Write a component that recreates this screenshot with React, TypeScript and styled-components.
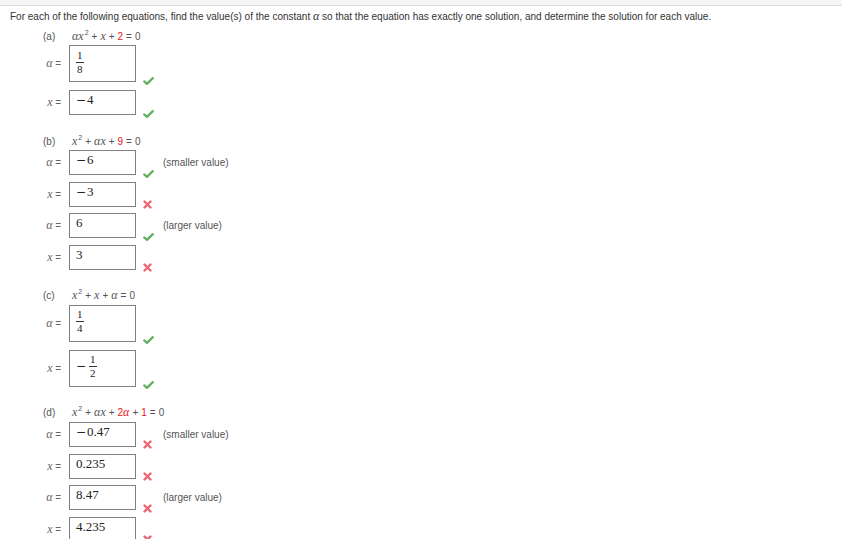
import React from 'react'
import styled, { createGlobalStyle } from 'styled-components'

const GlobalStyle = createGlobalStyle`
  body {
    margin: 0;
    background: #fff;
    font-family: "Liberation Sans", Arial, sans-serif;
    color: #333;
  }
`

const TopBar = styled.div`
  height: 5px;
  background: #f5f5f5;
  border-bottom: 1px solid #dcdcdc;
`

const Content = styled.main`
  display: flex;
  flex-direction: column;
  gap: 19px;
  padding: 3px 0 0 10px;
`

const Intro = styled.p`
  margin: 0 0 -14px;
  font-size: 10px;
  line-height: 14px;
  color: #333;
`

const Part = styled.section`
  display: flex;
  flex-direction: column;
  padding-left: 33px;
`

const Heading = styled.div`
  display: flex;
  align-items: center;
  height: 14px;
  margin-bottom: 2px;
  font-size: 10px;
  color: #555;
  white-space: nowrap;
`

const PartLabel = styled.span`
  width: 29px;
`

const Equation = styled.span`
  line-height: 14px;
`

const Op = styled.span`
  margin: 0 3px;
`

const Red = styled.span`
  color: #e8101a;
`

const Var = styled.i`
  font-family: "Liberation Serif", "Times New Roman", serif;
  font-style: italic;
  font-size: 12px;
`

const Sup = styled.sup`
  font-size: 7px;
  vertical-align: 5px;
  line-height: 0;
  margin-left: 1px;
`

const Rows = styled.div<{ $gap: number }>`
  display: flex;
  flex-direction: column;
  gap: ${p => p.$gap}px;
`

const Row = styled.div`
  display: flex;
  align-items: center;
`

const Label = styled.span`
  width: 21px;
  margin-right: 5px;
  text-align: right;
  font-size: 10px;
  color: #666;
  white-space: pre;
`

const Box = styled.div<{ $tall?: boolean }>`
  box-sizing: border-box;
  width: 67px;
  height: ${p => (p.$tall ? 37 : 25)}px;
  border: 1px solid #808080;
  padding: ${p => (p.$tall ? '0 0 3px 6px' : '1px 0 0 6px')};
  display: flex;
  align-items: ${p => (p.$tall ? 'center' : 'flex-start')};
  font-family: "Liberation Serif", "Times New Roman", serif;
  font-size: 13px;
  line-height: 15px;
  color: #222;
`

const Minus = styled.span<{ $gap?: number }>`
  font-family: "DejaVu Sans", sans-serif;
  font-size: 12px;
  margin-right: ${p => p.$gap ?? 1}px;
`

const Frac = styled.span`
  display: inline-flex;
  flex-direction: column;
  align-items: center;
  font-size: 11px;
  line-height: 11px;
`

const Num = styled.span`
  padding: 0 1px 1px;
`

const Bar = styled.span`
  align-self: stretch;
  height: 1px;
  background: #333;
`

const Den = styled.span`
  padding-top: 1px;
`

const MarkSlot = styled.span`
  align-self: flex-end;
  display: flex;
  width: 20px;
  margin: 0 0 -2.5px 7px;
`

const Note = styled.span`
  font-size: 10px;
  color: #555;
  white-space: nowrap;
`

function Check() {
  return (
    <svg width="11" height="8" viewBox="0 0 11 8">
      <path d="M1.2 4.4 L4 6.8 L9.8 1.2" fill="none" stroke="#62b062" strokeWidth="2.3" strokeLinecap="round" strokeLinejoin="round" />
    </svg>
  )
}

function Cross() {
  return (
    <svg width="9" height="9" viewBox="0 0 9 9">
      <path d="M1.5 1.5 L7.5 7.5 M7.5 1.5 L1.5 7.5" fill="none" stroke="#ef6470" strokeWidth="2.4" strokeLinecap="round" />
    </svg>
  )
}

function Fraction({ n, d }: { n: string; d: string }) {
  return (
    <Frac>
      <Num>{n}</Num>
      <Bar />
      <Den>{d}</Den>
    </Frac>
  )
}

type Answer = {
  v: 'a' | 'x'
  value: React.ReactNode
  tall?: boolean
  ok: boolean
  note?: string
}

function Neg({ children }: { children: React.ReactNode }) {
  return (
    <span>
      <Minus>−</Minus>
      {children}
    </span>
  )
}

function AnswerRow({ v, value, tall, ok, note }: Answer) {
  return (
    <Row>
      <Label>
        <Var>{v === 'a' ? 'α' : 'x'}</Var>{' = '}
      </Label>
      <Box $tall={tall}>{value}</Box>
      <MarkSlot>{ok ? <Check /> : <Cross />}</MarkSlot>
      {note && <Note>{note}</Note>}
    </Row>
  )
}

const parts: { id: string; eq: React.ReactNode; gap: number; rows: Answer[] }[] = [
  {
    id: 'a',
    gap: 8,
    eq: (
      <>
        <Var>αx</Var>
        <Sup>2</Sup>
        <Op>+</Op>
        <Var>x</Var>
        <Op>+</Op>
        <Red>2</Red>
        <Op>=</Op>0
      </>
    ),
    rows: [
      { v: 'a', tall: true, ok: true, value: <Fraction n="1" d="8" /> },
      { v: 'x', ok: true, value: <Neg>4</Neg> },
    ],
  },
  {
    id: 'b',
    gap: 6.67,
    eq: (
      <>
        <Var>x</Var>
        <Sup>2</Sup>
        <Op>+</Op>
        <Var>αx</Var>
        <Op>+</Op>
        <Red>9</Red>
        <Op>=</Op>0
      </>
    ),
    rows: [
      { v: 'a', ok: true, value: <Neg>6</Neg>, note: '(smaller value)' },
      { v: 'x', ok: false, value: <Neg>3</Neg> },
      { v: 'a', ok: true, value: '6', note: '(larger value)' },
      { v: 'x', ok: false, value: '3' },
    ],
  },
  {
    id: 'c',
    gap: 8,
    eq: (
      <>
        <Var>x</Var>
        <Sup>2</Sup>
        <Op>+</Op>
        <Var>x</Var>
        <Op>+</Op>
        <Var>α</Var>
        <Op>=</Op>0
      </>
    ),
    rows: [
      { v: 'a', tall: true, ok: true, value: <Fraction n="1" d="4" /> },
      {
        v: 'x',
        tall: true,
        ok: true,
        value: (
          <>
            <Minus $gap={3}>−</Minus>
            <Fraction n="1" d="2" />
          </>
        ),
      },
    ],
  },
  {
    id: 'd',
    gap: 6.67,
    eq: (
      <>
        <Var>x</Var>
        <Sup>2</Sup>
        <Op>+</Op>
        <Var>αx</Var>
        <Op>+</Op>
        <Red>
          2<Var>α</Var>
        </Red>
        <Op>+</Op>
        <Red>1</Red>
        <Op>=</Op>0
      </>
    ),
    rows: [
      { v: 'a', ok: false, value: <Neg>0.47</Neg>, note: '(smaller value)' },
      { v: 'x', ok: false, value: '0.235' },
      { v: 'a', ok: false, value: '8.47', note: '(larger value)' },
      { v: 'x', ok: false, value: '4.235' },
    ],
  },
]

export default function App() {
  return (
    <>
      <GlobalStyle />
      <TopBar />
      <Content>
        <Intro>
          For each of the following equations, find the value(s) of the constant <Var>α</Var> so that the equation has
          exactly one solution, and determine the solution for each value.
        </Intro>
        {parts.map(part => (
          <Part key={part.id}>
            <Heading>
              <PartLabel>({part.id})</PartLabel>
              <Equation>{part.eq}</Equation>
            </Heading>
            <Rows $gap={part.gap}>
              {part.rows.map((row, i) => (
                <AnswerRow key={i} {...row} />
              ))}
            </Rows>
          </Part>
        ))}
      </Content>
    </>
  )
}
